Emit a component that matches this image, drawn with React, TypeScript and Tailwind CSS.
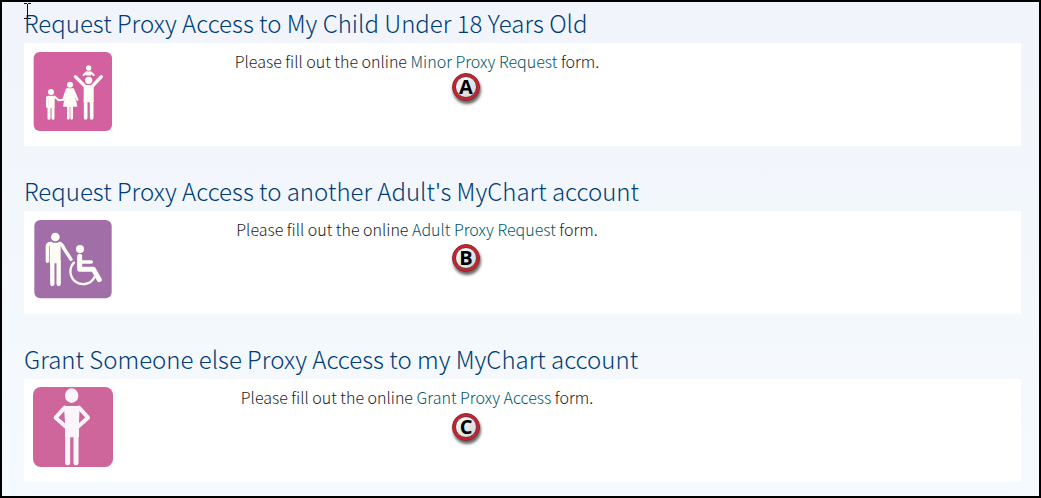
import type { ReactNode } from 'react'

type ProxyOption = {
  id: string
  title: string
  linkLabel: string
  icon: ReactNode
  marker: string
  markerTop: string
}

function FamilyIcon() {
  return (
    <svg className="h-20 w-20" viewBox="15 15 240 240" aria-hidden="true">
      <rect x="17" y="18" width="235" height="237" rx="18" fill="#d4619f" />
      <g fill="#fffef6" stroke="#fffef6" strokeLinecap="round" strokeLinejoin="round">
        {/* child */}
        <circle cx="69" cy="138" r="9" stroke="none" />
        <path d="M60 151h19l-1 34H61z" strokeWidth="3" />
        <path d="M63 182v35M75 182v35" strokeWidth="9" />
        <path d="M57 154v28M80 152l12 11 14-2" fill="none" strokeWidth="6" />
        {/* woman */}
        <circle cx="126" cy="116" r="9" stroke="none" />
        <path d="M119 129h14l13 51h-39z" strokeWidth="4" />
        <path d="M121 180v37M131 180v37" strokeWidth="8" />
        <path d="M117 130l-11 31M135 130l13 31" fill="none" strokeWidth="7" />
        {/* man with raised arms */}
        <circle cx="182" cy="103" r="11" stroke="none" />
        <path d="M169 119h26v48h-26z" strokeWidth="4" />
        <path d="M173 165v51M191 165v51" strokeWidth="11" />
        <path d="M172 122l-30-30M192 122l28-30" fill="none" strokeWidth="10" />
        {/* baby */}
        <circle cx="182" cy="66" r="8" stroke="none" />
        <path d="M177 78h10l2 9h-14z" strokeWidth="3" />
        <path d="M176 79l-9 8M188 79l9 8" fill="none" strokeWidth="6" />
      </g>
    </svg>
  )
}

function CareIcon() {
  return (
    <svg className="h-20 w-20" viewBox="15 15 240 240" aria-hidden="true">
      <rect x="19" y="18" width="232" height="235" rx="18" fill="#a26ea8" />
      <g fill="#fffef6" stroke="#fffef6" strokeLinecap="round" strokeLinejoin="round">
        {/* standing adult */}
        <circle cx="82" cy="69" r="13" stroke="none" />
        <path d="M67 88h29v58H67z" strokeWidth="4" />
        <path d="M73 144v66M92 144v66" strokeWidth="13" />
        <path d="M58 142V98q0-10 12-10" fill="none" strokeWidth="10" />
        <path d="M95 88q8 2 12 14l22 34" fill="none" strokeWidth="10" />
        {/* wheelchair user */}
        <circle cx="156" cy="105" r="12" stroke="none" />
        <path d="M155 127v39h41l18 31" fill="none" strokeWidth="15" />
        <path d="M157 144h33" fill="none" strokeWidth="10" />
        <path d="M138 146a38 38 0 1 0 62 42" fill="none" strokeWidth="7" />
      </g>
    </svg>
  )
}

function PersonIcon() {
  return (
    <svg className="h-20 w-20" viewBox="15 15 240 240" aria-hidden="true">
      <defs>
        <pattern id="grain" width="6" height="6" patternUnits="userSpaceOnUse">
          <rect width="6" height="6" fill="#d6609f" />
          <rect width="3" height="3" fill="#cc6399" />
          <rect x="3" y="3" width="3" height="3" fill="#d866a5" />
        </pattern>
      </defs>
      <rect x="15" y="15" width="240" height="240" rx="24" fill="url(#grain)" />
      <g fill="#fdf5fc" stroke="#fdf5fc" strokeLinecap="round" strokeLinejoin="round">
        <ellipse cx="131" cy="41" rx="20" ry="22" stroke="none" />
        <path d="M111 75h41l-2 46v42h-36v-42z" strokeWidth="6" />
        <path d="M119 162v80M144 162v80" strokeWidth="15" />
        <path d="M110 77l-27 30 29 26M153 77l27 30-29 26" fill="none" strokeWidth="12" />
      </g>
    </svg>
  )
}

function Marker({ label, top }: { label: string; top: string }) {
  return (
    <span
      className={`absolute left-[428px] ${top} flex h-7 w-7 items-center justify-center rounded-full border border-[#8c2830] bg-[#cf2030] p-[2px] shadow-[1px_3px_3px_0px_rgba(0,0,0,0.6)]`}
    >
      <span className="flex h-full w-full items-center justify-center rounded-full border border-[#6b3a40] bg-linear-to-br from-white to-[#d2d2d4] font-['Open_Sans',sans-serif] text-xl leading-none font-bold text-black">
        {label}
      </span>
    </span>
  )
}

const options: ProxyOption[] = [
  {
    id: 'minor',
    title: 'Request Proxy Access to My Child Under 18 Years Old',
    linkLabel: 'Minor Proxy Request',
    icon: <FamilyIcon />,
    marker: 'A',
    markerTop: 'top-[30px]',
  },
  {
    id: 'adult',
    title: "Request Proxy Access to another Adult's MyChart account",
    linkLabel: 'Adult Proxy Request',
    icon: <CareIcon />,
    marker: 'B',
    markerTop: 'top-[33px]',
  },
  {
    id: 'grant',
    title: 'Grant Someone else Proxy Access to my MyChart account',
    linkLabel: 'Grant Proxy Access',
    icon: <PersonIcon />,
    marker: 'C',
    markerTop: 'top-[34px]',
  },
]

export default function App() {
  return (
    <main className="relative border-2 border-black bg-linear-to-b from-[#f1f5fb] to-[#f5fafe] pt-0.5 pr-[18px] pb-3.5 pl-[22px] font-['Noto_Sans_CJK_SC',sans-serif] font-light">
      {/* text cursor */}
      <svg className="absolute top-0 left-[22px] h-[18px] w-2" viewBox="0 0 8 18" fill="none" stroke="#111" aria-hidden="true">
        <path d="M0 1.5h3M4 1.5h3M3.5 2v14M0 16.5h3M4 16.5h3" />
      </svg>
      <div className="flex flex-col gap-[26px]">
        {options.map((option) => (
          <section key={option.id} aria-labelledby={option.id}>
            <h2 id={option.id} className="pb-0.5 text-2xl leading-[37px] font-light text-[#003c78]">
              {option.title}
            </h2>
            <div className="relative flex min-h-[103px] items-start bg-white pt-2 pl-[9px]">
              <div className="shrink-0">{option.icon}</div>
              <p className="w-[608px] text-center text-base leading-5 text-[#1c1c1c]">
                Please fill out the online{' '}
                <a href="#" className="text-[#005468]">
                  {option.linkLabel}
                </a>{' '}
                form.
              </p>
              <Marker label={option.marker} top={option.markerTop} />
            </div>
          </section>
        ))}
      </div>
    </main>
  )
}
